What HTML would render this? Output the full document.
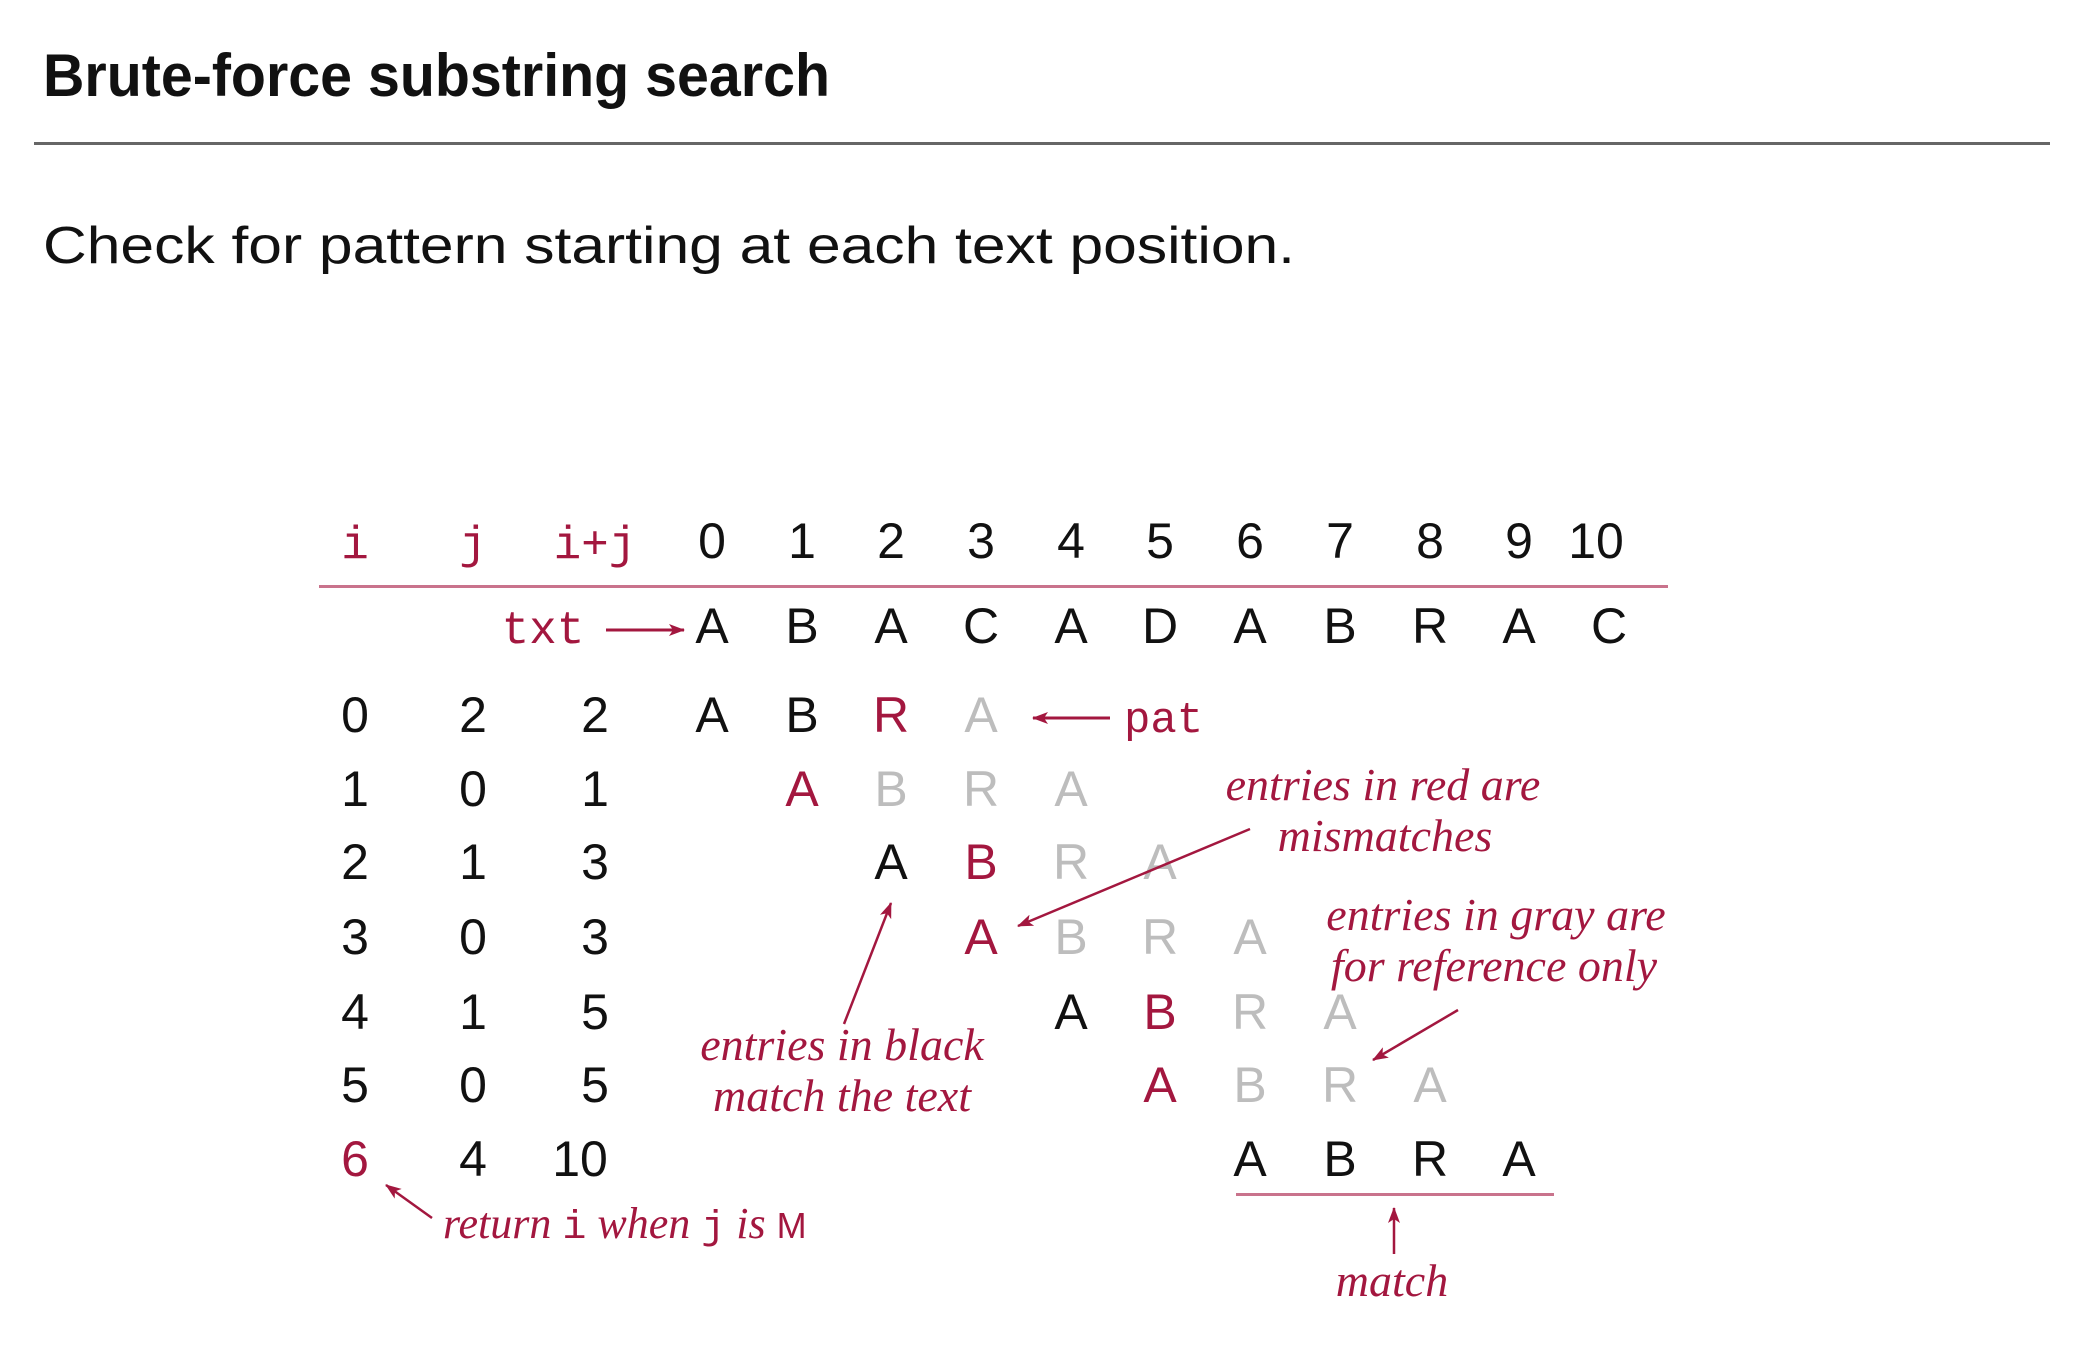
<!DOCTYPE html>
<html><head><meta charset="utf-8"><style>
html,body{margin:0;padding:0;background:#fff;width:2092px;height:1372px;overflow:hidden}
svg{display:block}
.t{font-family:"Liberation Sans",sans-serif;font-size:50px;text-anchor:middle;fill:#111}
.r{fill:#a3173f}
.g{fill:#bdbdbd}
.m{font-family:"Liberation Mono",monospace;font-size:46px;fill:#a3173f;text-anchor:middle}
.n{font-family:"Liberation Serif",serif;font-style:italic;font-size:46px;fill:#a3173f;text-anchor:middle}
</style></head><body>
<svg width="2092" height="1372" viewBox="0 0 2092 1372" xmlns="http://www.w3.org/2000/svg">
<defs><marker id="ah2" markerWidth="16" markerHeight="12" refX="15" refY="6" orient="auto" markerUnits="userSpaceOnUse"><path d="M0,0 L16,6 L0,12 L4,6 Z" fill="#a3173f"/></marker></defs>
<text x="43" y="96" font-family="Liberation Sans,sans-serif" font-weight="bold" font-size="60" fill="#111" textLength="787" lengthAdjust="spacingAndGlyphs">Brute-force substring search</text>
<rect x="34" y="142" width="2016" height="3" fill="#666"/>
<text x="43" y="263" font-family="Liberation Sans,sans-serif" font-size="52" fill="#111" textLength="1252" lengthAdjust="spacingAndGlyphs">Check for pattern starting at each text position.</text>

<text class="m" x="355" y="558">i</text>
<text class="m" x="473" y="558">j</text>
<text class="m" x="595" y="558">i+j</text>
<g class="t">
<text x="712" y="558">0</text><text x="802" y="558">1</text><text x="891" y="558">2</text><text x="981" y="558">3</text><text x="1071" y="558">4</text><text x="1160" y="558">5</text><text x="1250" y="558">6</text><text x="1340" y="558">7</text><text x="1430" y="558">8</text><text x="1519" y="558">9</text><text x="1596" y="558">10</text>
</g>
<rect x="319" y="585" width="1349" height="3" fill="#c9738c"/>
<text class="m" x="543" y="643">txt</text>
<line x1="606" y1="630" x2="684" y2="630" stroke="#a3173f" stroke-width="3" marker-end="url(#ah2)"/>
<g class="t">
<text x="712" y="643">A</text><text x="802" y="643">B</text><text x="891" y="643">A</text><text x="981" y="643">C</text><text x="1071" y="643">A</text><text x="1160" y="643">D</text><text x="1250" y="643">A</text><text x="1340" y="643">B</text><text x="1430" y="643">R</text><text x="1519" y="643">A</text><text x="1609" y="643">C</text>
</g>

<g class="t">
<text x="355" y="732">0</text><text x="473" y="732">2</text><text x="595" y="732">2</text>
<text x="712" y="732">A</text><text x="802" y="732">B</text><text class="t r" x="891" y="732">R</text><text class="t g" x="981" y="732">A</text>

<text x="355" y="806">1</text><text x="473" y="806">0</text><text x="595" y="806">1</text>
<text class="t r" x="802" y="806">A</text><text class="t g" x="891" y="806">B</text><text class="t g" x="981" y="806">R</text><text class="t g" x="1071" y="806">A</text>

<text x="355" y="879">2</text><text x="473" y="879">1</text><text x="595" y="879">3</text>
<text x="891" y="879">A</text><text class="t r" x="981" y="879">B</text><text class="t g" x="1071" y="879">R</text><text class="t g" x="1160" y="879">A</text>

<text x="355" y="954">3</text><text x="473" y="954">0</text><text x="595" y="954">3</text>
<text class="t r" x="981" y="954">A</text><text class="t g" x="1071" y="954">B</text><text class="t g" x="1160" y="954">R</text><text class="t g" x="1250" y="954">A</text>

<text x="355" y="1029">4</text><text x="473" y="1029">1</text><text x="595" y="1029">5</text>
<text x="1071" y="1029">A</text><text class="t r" x="1160" y="1029">B</text><text class="t g" x="1250" y="1029">R</text><text class="t g" x="1340" y="1029">A</text>

<text x="355" y="1102">5</text><text x="473" y="1102">0</text><text x="595" y="1102">5</text>
<text class="t r" x="1160" y="1102">A</text><text class="t g" x="1250" y="1102">B</text><text class="t g" x="1340" y="1102">R</text><text class="t g" x="1430" y="1102">A</text>

<text class="t r" x="355" y="1176">6</text><text x="473" y="1176">4</text><text x="580" y="1176">10</text>
<text x="1250" y="1176">A</text><text x="1340" y="1176">B</text><text x="1430" y="1176">R</text><text x="1519" y="1176">A</text>
</g>

<line x1="1110" y1="718" x2="1033" y2="718" stroke="#a3173f" stroke-width="3" marker-end="url(#ah2)"/>
<text x="1124" y="732" font-family="Liberation Mono,monospace" font-size="44" fill="#a3173f">pat</text>

<text class="n" x="1383" y="800">entries in red are</text>
<text class="n" x="1385" y="851">mismatches</text>
<line x1="1250" y1="829" x2="1018" y2="926" stroke="#a3173f" stroke-width="2.5" marker-end="url(#ah2)"/>

<text class="n" x="1496" y="930">entries in gray are</text>
<text class="n" x="1494" y="981">for reference only</text>
<line x1="1458" y1="1010" x2="1373" y2="1060" stroke="#a3173f" stroke-width="2.5" marker-end="url(#ah2)"/>

<text class="n" x="842" y="1060">entries in black</text>
<text class="n" x="842" y="1111">match the text</text>
<line x1="844" y1="1024" x2="891" y2="903" stroke="#a3173f" stroke-width="2.5" marker-end="url(#ah2)"/>

<text x="443" y="1238" font-family="Liberation Serif,serif" font-style="italic" font-size="44" fill="#a3173f">return <tspan font-family="Liberation Mono,monospace" font-style="normal" font-size="40">i</tspan> when <tspan font-family="Liberation Mono,monospace" font-style="normal" font-size="40">j</tspan> is <tspan font-family="Liberation Sans,sans-serif" font-style="normal" font-size="36">M</tspan></text>
<line x1="432" y1="1218" x2="386" y2="1185" stroke="#a3173f" stroke-width="2.5" marker-end="url(#ah2)"/>

<rect x="1236" y="1193" width="318" height="3" fill="#c9738c"/>
<line x1="1394" y1="1254" x2="1394" y2="1208" stroke="#a3173f" stroke-width="2.5" marker-end="url(#ah2)"/>
<text class="n" x="1392" y="1296">match</text>
</svg>
</body></html>
